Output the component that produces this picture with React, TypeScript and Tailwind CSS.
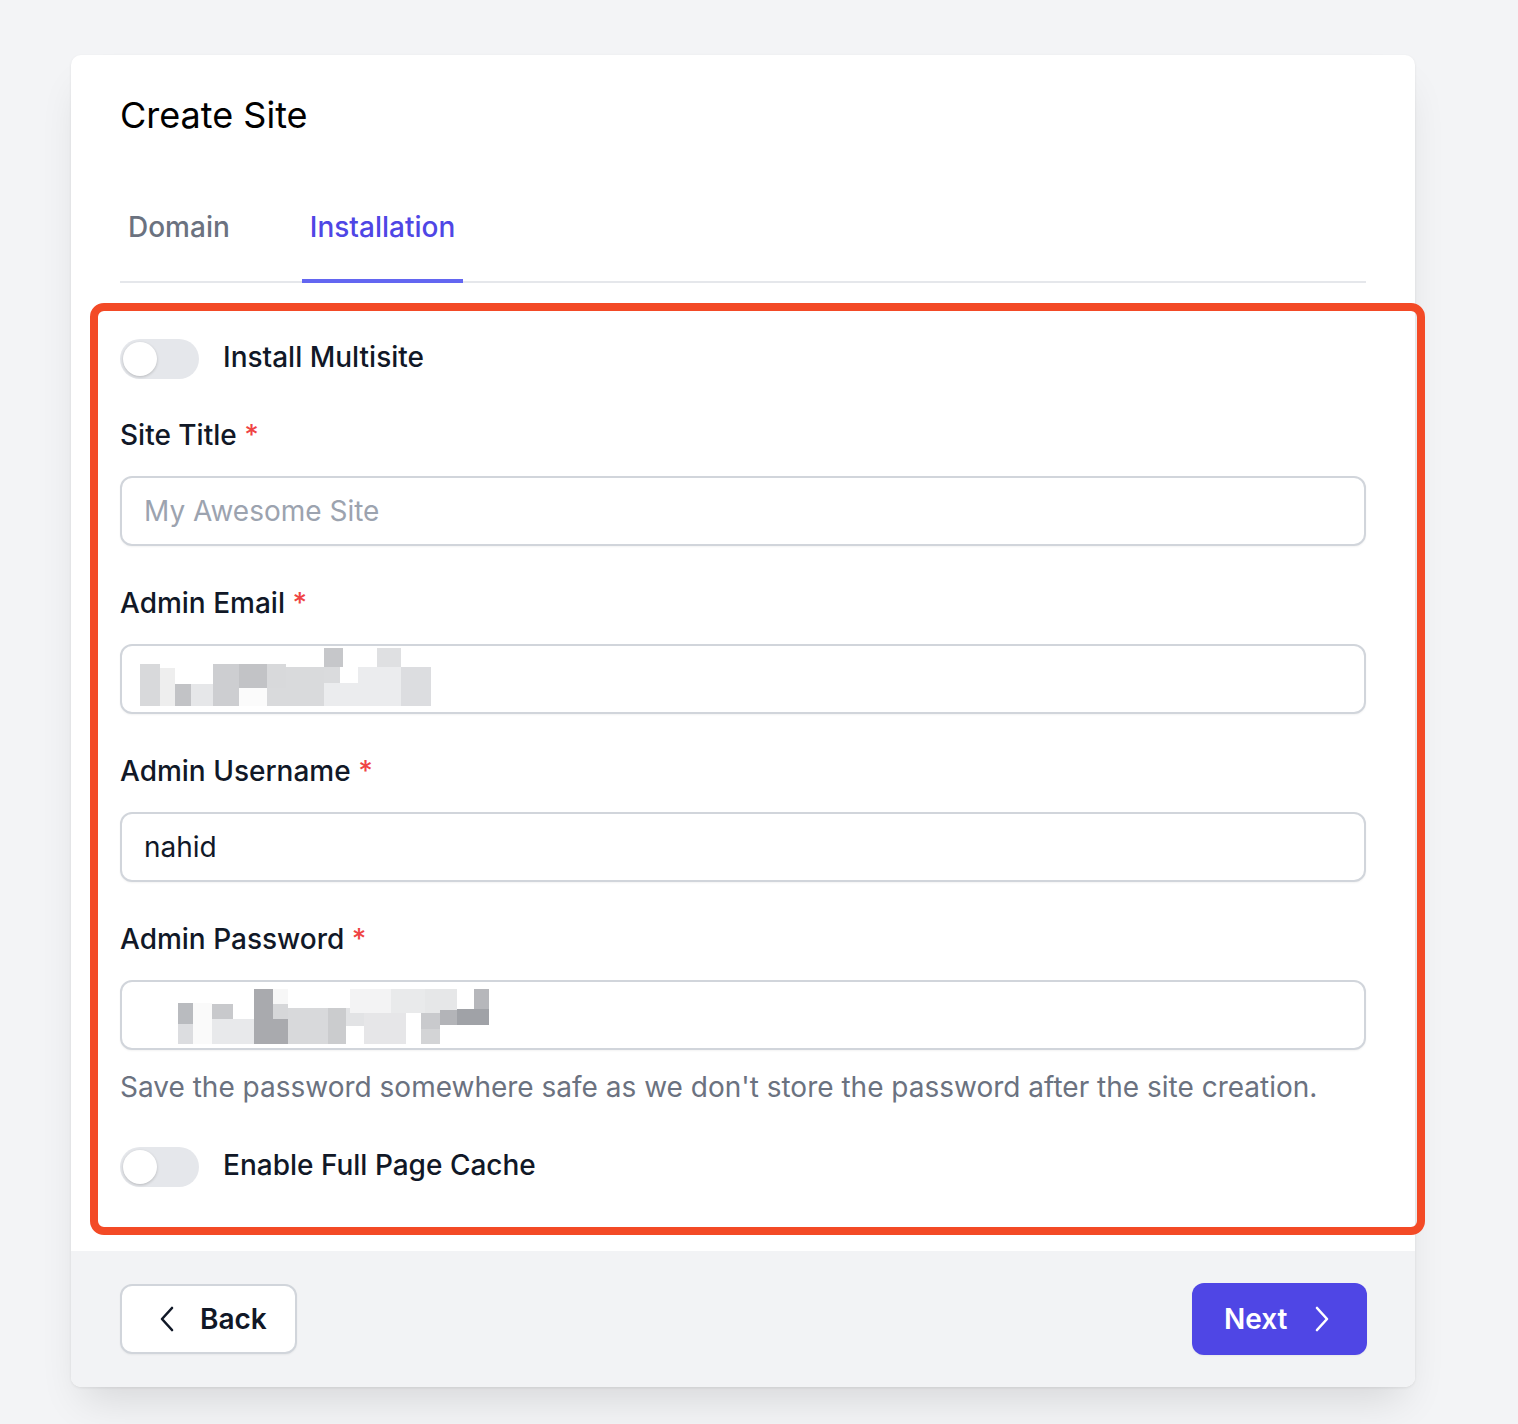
import React from 'react';

type Block = [number, number, number, number, string];

const emailBlocks: Block[] = [
  [18, 18, 20, 42, '#d8d9db'],
  [38, 22, 15, 38, '#eeeeee'],
  [53, 38, 16, 22, '#c2c3c6'],
  [69, 38, 22, 22, '#e6e7e9'],
  [91, 18, 26, 42, '#cdced1'],
  [117, 18, 28, 24, '#c2c3c6'],
  [117, 42, 28, 18, '#fbfbfb'],
  [145, 18, 19, 24, '#d8d9db'],
  [145, 42, 19, 18, '#d9dadc'],
  [164, 21, 38, 39, '#d9dadc'],
  [202, 2, 19, 19, '#c6c7ca'],
  [202, 21, 16, 16, '#dadbdd'],
  [202, 37, 34, 23, '#ebecee'],
  [236, 21, 43, 39, '#ebecee'],
  [255, 2, 24, 19, '#dfe0e2'],
  [279, 21, 30, 39, '#dcdde0'],
];

const passwordBlocks: Block[] = [
  [56, 21, 15, 21, '#b9bbbf'],
  [56, 42, 15, 20, '#dcdde0'],
  [71, 21, 19, 41, '#fafafa'],
  [90, 22, 21, 15, '#c8c9cc'],
  [90, 37, 42, 25, '#e8e9eb'],
  [132, 7, 19, 55, '#a9aaae'],
  [151, 7, 15, 15, '#f7f7f7'],
  [151, 22, 15, 15, '#d6d7d9'],
  [151, 37, 15, 25, '#a9aaae'],
  [166, 26, 40, 36, '#d8d9db'],
  [206, 26, 18, 36, '#cbccce'],
  [224, 26, 18, 18, '#e2e3e5'],
  [228, 7, 41, 24, '#f3f3f4'],
  [242, 31, 42, 31, '#e6e6e8'],
  [269, 7, 34, 24, '#e9eaeb'],
  [303, 7, 32, 24, '#e6e7e8'],
  [299, 31, 19, 16, '#c9cacd'],
  [299, 47, 19, 15, '#d3d4d6'],
  [318, 28, 17, 15, '#b3b4b8'],
  [335, 27, 32, 16, '#a0a2a7'],
  [352, 7, 15, 20, '#b6b7bb'],
];

function Pixelated({ blocks }: { blocks: Block[] }) {
  return (
    <svg width="400" height="66" viewBox="0 0 400 66" className="block">
      {blocks.map(([x, y, w, h, c], i) => (
        <rect key={i} x={x} y={y} width={w} height={h} fill={c} />
      ))}
    </svg>
  );
}

function Toggle({ label }: { label: string }) {
  return (
    <div className="flex items-center gap-[24px]">
      <div className="relative h-[40px] w-[79px] rounded-full bg-[#e5e7eb]">
        <span className="absolute left-[3px] top-[3px] h-[34px] w-[34px] rounded-full bg-white shadow-[0_1px_3px_rgba(0,0,0,0.2)]" />
      </div>
      <span className="-mt-[4px] text-[28px] leading-[40px] font-medium text-[#111827]">{label}</span>
    </div>
  );
}

function Label({ text }: { text: string }) {
  return (
    <div className="text-[28px] leading-[40px] font-medium text-[#111827]">
      {text} <span className="text-[#ef4444]">*</span>
    </div>
  );
}

function Field({ label, children }: { label: string; children: React.ReactNode }) {
  return (
    <div>
      <Label text={label} />
      <div className="mt-[21px] h-[70px] rounded-[12px] border-2 border-[#d1d5db] bg-white shadow-[0_1px_2px_rgba(0,0,0,0.05)] overflow-hidden">
        {children}
      </div>
    </div>
  );
}

export default function App() {
  return (
    <div
      className="min-h-[1424px] bg-[#f3f4f6] pt-[55px] pb-[37px]"
      style={{ fontFamily: 'Inter, "Noto Sans", sans-serif' }}
    >
      <div className="ml-[71px] w-[1344px] rounded-[10px] bg-white shadow-[0_1px_3px_rgba(0,0,0,0.08),0_24px_40px_-12px_rgba(0,0,0,0.12)]">
        <div className="px-[49px] pt-[36px]">
          <h1 className="text-[36px] leading-[48px] font-normal text-black">Create Site</h1>

          <div className="mt-[68px] flex gap-[64px] border-b-2 border-[#e5e7eb]">
            <div className="-mb-[2px] border-b-4 border-transparent px-[8px] pb-[32px] text-[28px] leading-[40px] font-medium text-[#6b7280]">
              Domain
            </div>
            <div className="-mb-[2px] border-b-4 border-[#6366f1] px-[8px] pb-[32px] text-[28px] leading-[40px] font-medium text-[#4f46e5]">
              Installation
            </div>
          </div>

          <div className="relative pt-[56px] pb-[64px]">
            <Toggle label="Install Multisite" />

            <div className="mt-[36px] flex flex-col gap-[37px]">
              <Field label="Site Title">
                <div className="flex h-full items-center px-[22px] text-[28px] text-[#9ca3af]">My Awesome Site</div>
              </Field>
              <Field label="Admin Email">
                <Pixelated blocks={emailBlocks} />
              </Field>
              <Field label="Admin Username">
                <div className="flex h-full items-center px-[22px] text-[28px] text-[#111827]">nahid</div>
              </Field>
              <div>
                <Field label="Admin Password">
                  <Pixelated blocks={passwordBlocks} />
                </Field>
                <p className="mt-[17px] text-[28px] leading-[40px] text-[#6b7280]">
                  Save the password somewhere safe as we don't store the password after the site creation.
                </p>
              </div>
            </div>

            <div className="mt-[40px]">
              <Toggle label="Enable Full Page Cache" />
            </div>

            {/* annotation outline */}
            <div className="pointer-events-none absolute -left-[30px] -right-[59px] top-[20px] bottom-[16px] rounded-[14px] border-[8px] border-[#f34a26]" />
          </div>
        </div>

        <div className="flex items-center justify-between rounded-b-[10px] bg-[#f2f3f5] pl-[49px] pr-[48px] py-[32px]">
          <button className="flex h-[70px] w-[177px] items-center gap-[26px] rounded-[12px] border-2 border-[#d1d5db] bg-white pl-[38px] text-[28px] font-semibold text-[#111827] shadow-[0_1px_2px_rgba(0,0,0,0.05)]">
            <svg width="14" height="26" viewBox="0 0 14 26" fill="none">
              <path d="M12 2 L2 13 L12 24" stroke="#111827" strokeWidth="2.6" strokeLinecap="round" strokeLinejoin="round" />
            </svg>
            Back
          </button>
          <button className="flex h-[72px] w-[175px] items-center gap-[27px] rounded-[12px] bg-[#4f46e5] pl-[32px] text-[28px] font-semibold text-white shadow-[0_1px_2px_rgba(0,0,0,0.05)]">
            Next
            <svg width="14" height="26" viewBox="0 0 14 26" fill="none">
              <path d="M2 2 L12 13 L2 24" stroke="white" strokeWidth="2.6" strokeLinecap="round" strokeLinejoin="round" />
            </svg>
          </button>
        </div>
      </div>
    </div>
  );
}
